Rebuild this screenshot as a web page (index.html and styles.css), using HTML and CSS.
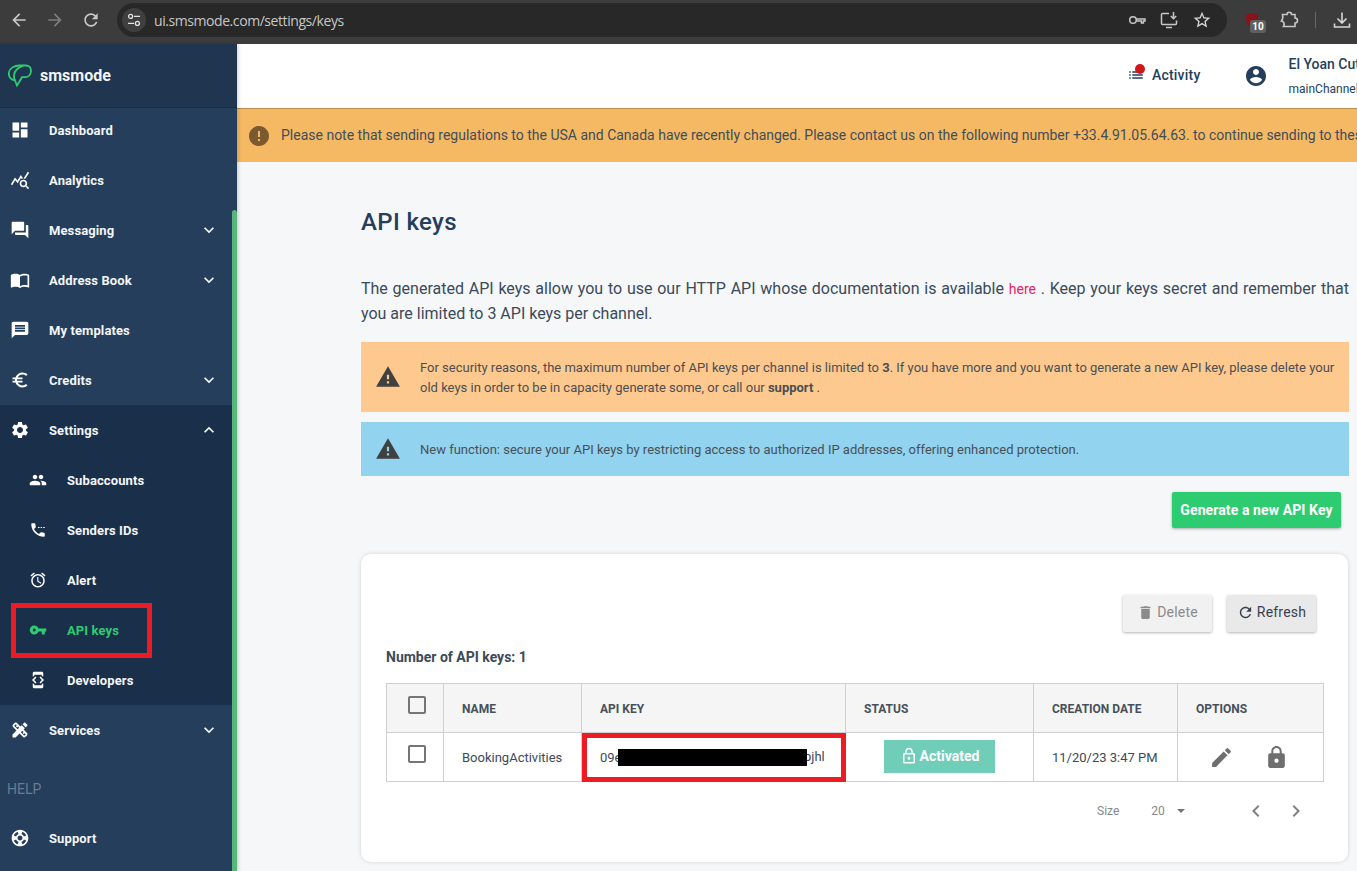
FILE: index.html
```html
<!DOCTYPE html>
<html>
<head>
  <title>API keys - smsmode</title>
  <link rel="stylesheet" href="styles.css">
</head>
<body>

<!-- icon sheet -->
<svg class="sprite" xmlns="http://www.w3.org/2000/svg">
  <symbol id="i-dashboard" viewBox="0 0 24 24"><path d="M3 13h8V3H3v10zm0 8h8v-6H3v6zm10 0h8V11h-8v10zm0-18v6h8V3h-8z"/></symbol>
  <symbol id="i-analytics" viewBox="0 0 24 24"><path d="M19.88 18.47c.44-.7.7-1.51.7-2.39 0-2.49-2.01-4.5-4.5-4.5s-4.5 2.01-4.5 4.5 2.01 4.5 4.49 4.5c.88 0 1.7-.26 2.39-.7L21.58 23 23 21.58l-3.12-3.11zm-3.8.11c-1.38 0-2.5-1.12-2.5-2.5s1.12-2.5 2.5-2.5 2.5 1.12 2.5 2.5-1.12 2.5-2.5 2.5zm-.36-8.5c-.74.02-1.45.18-2.1.45l-.55-.83-3.8 6.18-3.01-3.52-3.63 5.81L1 17l5-8 3 3.5L13 6l2.72 4.08zm2.59.5c-.64-.28-1.33-.45-2.05-.49L21.38 2 23 3.18l-4.69 7.4z"/></symbol>
  <symbol id="i-forum" viewBox="0 0 24 24"><path d="M21 6h-2v9H6v2c0 .55.45 1 1 1h11l4 4V7c0-.55-.45-1-1-1zm-4 6V3c0-.55-.45-1-1-1H3c-.55 0-1 .45-1 1v14l4-4h10c.55 0 1-.45 1-1z"/></symbol>
  <symbol id="i-book" viewBox="0 0 24 24"><path d="M21 5c-1.11-.35-2.33-.5-3.5-.5-1.95 0-4.05.4-5.5 1.5-1.45-1.1-3.55-1.5-5.5-1.5S2.45 4.9 1 6v14.65c0 .25.25.5.5.5.1 0 .15-.05.25-.05C3.1 20.45 5.05 20 6.5 20c1.95 0 4.05.4 5.5 1.5 1.35-.85 3.8-1.5 5.5-1.5 1.65 0 3.35.3 4.75 1.05.1.05.15.05.25.05.25 0 .5-.25.5-.5V6c-.6-.45-1.25-.75-2-1zm0 13.5c-1.1-.35-2.3-.5-3.5-.5-1.7 0-4.15.65-5.5 1.5V8c1.35-.85 3.8-1.5 5.5-1.5 1.2 0 2.4.15 3.5.5v11.5z"/></symbol>
  <symbol id="i-message" viewBox="0 0 24 24"><path d="M20 2H4c-1.1 0-1.99.9-1.99 2L2 22l4-4h14c1.1 0 2-.9 2-2V4c0-1.1-.9-2-2-2zm-2 12H6v-2h12v2zm0-3H6V9h12v2zm0-3H6V6h12v2z"/></symbol>
  <symbol id="i-euro" viewBox="0 0 24 24"><path d="M15 18.5c-2.51 0-4.68-1.42-5.76-3.5H15v-2H8.58c-.05-.33-.08-.66-.08-1s.03-.67.08-1H15V9H9.24C10.32 6.92 12.5 5.5 15 5.5c1.61 0 3.09.59 4.23 1.57L21 5.3C19.41 3.87 17.3 3 15 3c-3.92 0-7.24 2.51-8.48 6H3v2h3.06c-.04.33-.06.66-.06 1s.02.67.06 1H3v2h3.52c1.24 3.49 4.56 6 8.48 6 2.31 0 4.41-.87 6-2.3l-1.78-1.77c-1.13.98-2.6 1.57-4.22 1.57z"/></symbol>
  <symbol id="i-settings" viewBox="0 0 24 24"><path d="M19.14 12.94c.04-.3.06-.61.06-.94 0-.32-.02-.64-.07-.94l2.03-1.58c.18-.14.23-.41.12-.61l-1.92-3.32c-.12-.22-.37-.29-.59-.22l-2.39.96c-.5-.38-1.03-.7-1.62-.94l-.36-2.54c-.04-.24-.24-.41-.48-.41h-3.84c-.24 0-.43.17-.47.41l-.36 2.54c-.59.24-1.13.57-1.62.94l-2.39-.96c-.22-.08-.47 0-.59.22L2.74 8.87c-.12.21-.08.47.12.61l2.03 1.58c-.05.3-.09.63-.09.94s.02.64.07.94l-2.03 1.58c-.18.14-.23.41-.12.61l1.92 3.32c.12.22.37.29.59.22l2.39-.96c.5.38 1.03.7 1.62.94l.36 2.54c.05.24.24.41.48.41h3.84c.24 0 .44-.17.47-.41l.36-2.54c.59-.24 1.13-.56 1.62-.94l2.39.96c.22.08.47 0 .59-.22l1.92-3.32c.12-.22.07-.47-.12-.61l-2.01-1.58zM12 15.6c-1.98 0-3.6-1.62-3.6-3.6s1.62-3.6 3.6-3.6 3.6 1.62 3.6 3.6-1.62 3.6-3.6 3.6z"/></symbol>
  <symbol id="i-people" viewBox="0 0 24 24"><path d="M16 11c1.66 0 2.99-1.34 2.99-3S17.66 5 16 5c-1.66 0-3 1.34-3 3s1.34 3 3 3zm-8 0c1.66 0 2.99-1.34 2.99-3S9.66 5 8 5C6.34 5 5 6.34 5 8s1.34 3 3 3zm0 2c-2.33 0-7 1.17-7 3.5V19h14v-2.5c0-2.33-4.67-3.5-7-3.5zm8 0c-.29 0-.62.02-.97.05 1.16.84 1.97 1.97 1.97 3.45V19h6v-2.5c0-2.33-4.67-3.5-7-3.5z"/></symbol>
  <symbol id="i-phone" viewBox="0 0 24 24"><path d="M6.62 10.79c1.44 2.83 3.76 5.14 6.59 6.59l2.2-2.2c.27-.27.67-.36 1.02-.24 1.12.37 2.33.57 3.57.57.55 0 1 .45 1 1V20c0 .55-.45 1-1 1-9.39 0-17-7.61-17-17 0-.55.45-1 1-1h3.5c.55 0 1 .45 1 1 0 1.25.2 2.45.57 3.57.11.35.03.74-.25 1.02l-2.2 2.2z"/><path d="M12 8h2v1.4h-2zM15.5 8h2v1.4h-2zM19 8h2v1.4h-2z"/></symbol>
  <symbol id="i-alarm" viewBox="0 0 24 24"><path d="M22 5.72l-4.6-3.86-1.29 1.53 4.6 3.86L22 5.72zM7.88 3.39L6.6 1.86 2 5.71l1.29 1.53 4.59-3.85zM12.5 8H11v6l4.75 2.85.75-1.23-4-2.37V8zM12 4c-4.97 0-9 4.03-9 9s4.02 9 9 9c4.97 0 9-4.03 9-9s-4.03-9-9-9zm0 16c-3.87 0-7-3.13-7-7s3.13-7 7-7 7 3.13 7 7-3.13 7-7 7z"/></symbol>
  <symbol id="i-key" viewBox="0 0 24 24"><path d="M12.65 10C11.83 7.67 9.61 6 7 6c-3.31 0-6 2.69-6 6s2.69 6 6 6c2.61 0 4.83-1.67 5.65-4H17v4h4v-4h2v-4H12.65zM7 14c-1.1 0-2-.9-2-2s.9-2 2-2 2 .9 2 2-.9 2-2 2z"/></symbol>
  <symbol id="i-dev" viewBox="0 0 24 24"><path d="M7 5h10v2h2V3c0-1.1-.9-1.99-2-1.99L7 1c-1.1 0-2 .9-2 2v4h2V5zm8.41 11.59L20 12l-4.59-4.59L14 8.83 17.17 12 14 15.17l1.41 1.42zM10 15.17L6.83 12 10 8.83 8.59 7.41 4 12l4.59 4.59L10 15.17zM17 19H7v-2H5v4c0 1.1.9 2 2 2h10c1.1 0 2-.9 2-2v-4h-2v2z"/></symbol>
  <symbol id="i-services" viewBox="0 0 24 24"><path d="M16.24 11.51l1.57-1.57-3.75-3.75-1.57 1.57-4.14-4.13c-.78-.78-2.05-.78-2.83 0l-1.9 1.9c-.78.78-.78 2.05 0 2.83l4.13 4.13L3 17.25V21h3.75l4.76-4.76 4.13 4.13c.95.95 2.23.6 2.83 0l1.9-1.9c.78-.78.78-2.05 0-2.83l-4.13-4.13zm-7.06-.44L5.04 6.94l1.89-1.9L8.2 6.31 7.02 7.5l1.41 1.41 1.19-1.19 1.45 1.45-1.89 1.9zm7.88 7.89l-4.13-4.13 1.9-1.9 1.45 1.45-1.19 1.19 1.41 1.41 1.19-1.19 1.27 1.27-1.9 1.9zM20.71 7.04c.39-.39.39-1.02 0-1.41l-2.34-2.34c-.47-.47-1.12-.29-1.41 0l-1.83 1.83 3.75 3.75 1.83-1.83z"/></symbol>
  <symbol id="i-support" viewBox="0 0 24 24"><path d="M12 2C6.48 2 2 6.48 2 12s4.48 10 10 10 10-4.48 10-10S17.52 2 12 2zm7.46 7.12l-2.78 1.15c-.51-1.36-1.58-2.44-2.95-2.94l1.15-2.78c2.1.8 3.77 2.47 4.58 4.57zM12 15c-1.66 0-3-1.34-3-3s1.34-3 3-3 3 1.34 3 3-1.34 3-3 3zM9.13 4.54l1.17 2.78c-1.38.5-2.47 1.59-2.98 2.97L4.54 9.13c.81-2.11 2.48-3.78 4.59-4.59zM4.54 14.87l2.78-1.15c.51 1.38 1.59 2.46 2.97 2.96l-1.17 2.78c-2.1-.81-3.77-2.48-4.58-4.59zm10.34 4.59l-1.15-2.78c1.37-.51 2.45-1.59 2.95-2.97l2.78 1.17c-.81 2.1-2.48 3.77-4.58 4.58z"/></symbol>
  <symbol id="i-more" viewBox="0 0 24 24"><path d="M16.59 8.59L12 13.17 7.41 8.59 6 10l6 6 6-6z"/></symbol>
  <symbol id="i-less" viewBox="0 0 24 24"><path d="M12 8l-6 6 1.41 1.41L12 10.83l4.59 4.58L18 14z"/></symbol>
  <symbol id="i-warning" viewBox="0 0 24 24"><path d="M1 21h22L12 2 1 21zm12-3h-2v-2h2v2zm0-4h-2v-4h2v4z"/></symbol>
  <symbol id="i-error" viewBox="0 0 24 24"><path d="M12 2C6.48 2 2 6.48 2 12s4.48 10 10 10 10-4.48 10-10S17.52 2 12 2zm1 15h-2v-2h2v2zm0-4h-2V7h2v6z"/></symbol>
  <symbol id="i-list" viewBox="0 0 24 24"><path d="M3 13h2v-2H3v2zm0 4h2v-2H3v2zm0-8h2V7H3v2zm4 4h14v-2H7v2zm0 4h14v-2H7v2zM7 7v2h14V7H7z"/></symbol>
  <symbol id="i-account" viewBox="0 0 24 24"><path d="M12 2C6.48 2 2 6.48 2 12s4.48 10 10 10 10-4.48 10-10S17.52 2 12 2zm0 3c1.66 0 3 1.34 3 3s-1.34 3-3 3-3-1.34-3-3 1.34-3 3-3zm0 14.2c-2.5 0-4.71-1.28-6-3.22.03-1.99 4-3.08 6-3.08 1.99 0 5.97 1.09 6 3.08-1.29 1.94-3.5 3.22-6 3.22z"/></symbol>
  <symbol id="i-delete" viewBox="0 0 24 24"><path d="M6 19c0 1.1.9 2 2 2h8c1.1 0 2-.9 2-2V7H6v12zM19 4h-3.5l-1-1h-5l-1 1H5v2h14V4z"/></symbol>
  <symbol id="i-refresh" viewBox="0 0 24 24"><path d="M17.65 6.35C16.2 4.9 14.21 4 12 4c-4.42 0-7.99 3.58-7.99 8s3.57 8 7.99 8c3.73 0 6.84-2.55 7.73-6h-2.08c-.82 2.33-3.04 4-5.65 4-3.31 0-6-2.69-6-6s2.69-6 6-6c1.66 0 3.14.69 4.22 1.78L13 11h7V4l-2.35 2.35z"/></symbol>
  <symbol id="i-edit" viewBox="0 0 24 24"><path d="M3 17.25V21h3.75L17.81 9.94l-3.75-3.75L3 17.25zM20.71 7.04c.39-.39.39-1.02 0-1.41l-2.34-2.34c-.39-.39-1.02-.39-1.41 0l-1.83 1.83 3.75 3.75 1.83-1.83z"/></symbol>
  <symbol id="i-lock" viewBox="0 0 24 24"><path d="M18 8h-1V6c0-2.76-2.24-5-5-5S7 3.24 7 6v2H6c-1.1 0-2 .9-2 2v10c0 1.1.9 2 2 2h12c1.1 0 2-.9 2-2V10c0-1.1-.9-2-2-2zm-6 9c-1.1 0-2-.9-2-2s.9-2 2-2 2 .9 2 2-.9 2-2 2zm3.1-9H8.9V6c0-1.71 1.39-3.1 3.1-3.1 1.71 0 3.1 1.39 3.1 3.1v2z"/></symbol>
  <symbol id="i-lock-line" viewBox="0 0 24 24"><path d="M12 17c1.1 0 2-.9 2-2s-.9-2-2-2-2 .9-2 2 .9 2 2 2zm6-9h-1V6c0-2.76-2.24-5-5-5S7 3.24 7 6v2H6c-1.1 0-2 .9-2 2v10c0 1.1.9 2 2 2h12c1.1 0 2-.9 2-2V10c0-1.1-.9-2-2-2zM8.9 6c0-1.71 1.39-3.1 3.1-3.1s3.1 1.39 3.1 3.1v2H8.9V6zM18 20H6V10h12v10z"/></symbol>
  <symbol id="i-left" viewBox="0 0 24 24"><path d="M15.41 7.41L14 6l-6 6 6 6 1.41-1.41L10.83 12z"/></symbol>
  <symbol id="i-right" viewBox="0 0 24 24"><path d="M10 6L8.59 7.41 13.17 12l-4.58 4.59L10 18l6-6z"/></symbol>
</svg>

<!-- browser bar -->
<div class="chrome">
  <svg class="chrome-nav" viewBox="0 0 24 24"><path d="M20 11H7.83l5.59-5.59L12 4l-8 8 8 8 1.41-1.41L7.83 13H20v-2z"/></svg>
  <svg class="chrome-nav dim" viewBox="0 0 24 24"><path d="M12 4l-1.41 1.41L16.17 11H4v2h12.17l-5.58 5.59L12 20l8-8z"/></svg>
  <svg class="chrome-nav" viewBox="0 0 24 24"><use href="#i-refresh"/></svg>
  <div class="omnibox">
    <span class="site-btn">
      <svg width="14" height="14" viewBox="0 0 14 14" fill="none" stroke="#e3e3e3" stroke-width="1.3"><circle cx="3.6" cy="3.4" r="2"/><path d="M7 3.4h6M1 10.4h6"/><circle cx="10.4" cy="10.4" r="2"/></svg>
    </span>
    <span class="url">ui.smsmode.com/settings/keys</span>
    <span class="omni-icons">
      <svg width="18" height="18" viewBox="0 0 18 18" fill="none" stroke="#c7c7c7" stroke-width="1.5"><circle cx="5" cy="9" r="3.3"/><path d="M8.3 8h8.7v2h-1.6v2h-2v-2H8.3"/></svg>
      <svg width="18" height="18" viewBox="0 0 18 18" fill="none" stroke="#c7c7c7" stroke-width="1.5"><path d="M9 2.5H2.5a1 1 0 0 0-1 1v9a1 1 0 0 0 1 1h13a1 1 0 0 0 1-1V9.5M6 16.500h6M13.500 1v6.500M10.800 5l2.700 2.700L16.200 5"/></svg>
      <svg width="20" height="20" viewBox="0 0 24 24" fill="#d6d6d6"><path d="M22 9.240l-7.190-.62L12 2 9.190 8.630 2 9.240l5.460 4.730L5.820 21 12 17.270 18.180 21l-1.630-7.030L22 9.240zM12 15.400l-3.760 2.270 1-4.280-3.320-2.880 4.380-.38L12 6.100l1.710 4.040 4.380.38-3.320 2.880 1 4.280L12 15.400z"/></svg>
    </span>
  </div>
  <div class="chrome-tools">
    <span class="ublock">
      <svg class="shield" width="14" height="15" viewBox="0 0 16 18"><path d="M8 0l7 2.200v6C15 13 12 16 8 18 4 16 1 13 1 8.200v-6z" fill="#8b1218"/></svg>
      <span class="ublock-count">10</span>
    </span>
    <svg class="puzzle" width="20" height="20" viewBox="0 0 20 20" fill="none" stroke="#c7c7c7" stroke-width="1.6"><path d="M3.500 4.500H8c0-1.500 1-2.300 2.200-2.300s2.300.8 2.300 2.300H16v3.500c1.600 0 2.500 1.100 2.500 2.500S17.600 13 16 13v3.500H4.500c.8-1.500.8-3.500-.3-4.500-.5-.6-1.200-1-1.700-1 1.500-2 1.500-4.500 1-6.500z"/></svg>
    <span class="chrome-sep"></span>
    <svg class="download" width="18" height="18" viewBox="0 0 18 18" fill="none" stroke="#d6d6d6" stroke-width="1.6"><path d="M9 1.500v10M4.500 7.500L9 12l4.500-4.500M1.500 12.500v3.500h15v-3.500"/></svg>
  </div>
</div>

<div class="app">

  <!-- sidebar -->
  <aside class="sidebar">
    <div class="logo">
      <svg width="24" height="24" viewBox="0 0 24 24" fill="none" stroke="#2ecc71" stroke-width="1.800"><path d="M12 1.500h6c3 0 5 2.200 5 5.300 0 3.800-2.600 6.400-6 6.400h-3L9 21.500 7 16.500C3 15.500.8 12.800.8 9.500.8 4.500 6 1.500 12 1.500z"/><path d="M15 1.700C10.500 3.500 6.500 7 6 11c-.2 2 .3 4 1 5.500"/></svg>
      <span class="logo-text">smsmode</span>
    </div>
    <nav class="menu">
      <a class="item"><svg class="ico"><use href="#i-dashboard"/></svg>Dashboard</a>
      <a class="item"><svg class="ico"><use href="#i-analytics"/></svg>Analytics</a>
      <a class="item"><svg class="ico"><use href="#i-forum"/></svg>Messaging<svg class="chev"><use href="#i-more"/></svg></a>
      <a class="item"><svg class="ico"><use href="#i-book"/></svg>Address Book<svg class="chev"><use href="#i-more"/></svg></a>
      <a class="item"><svg class="ico"><use href="#i-message"/></svg>My templates</a>
      <a class="item"><svg class="ico"><use href="#i-euro"/></svg>Credits<svg class="chev"><use href="#i-more"/></svg></a>
      <div class="group">
        <a class="item"><svg class="ico"><use href="#i-settings"/></svg>Settings<svg class="chev"><use href="#i-less"/></svg></a>
        <a class="item sub"><svg class="ico"><use href="#i-people"/></svg>Subaccounts</a>
        <a class="item sub"><svg class="ico"><use href="#i-phone"/></svg>Senders IDs</a>
        <a class="item sub"><svg class="ico"><use href="#i-alarm"/></svg>Alert</a>
        <a class="item sub active"><svg class="ico"><use href="#i-key"/></svg>API keys</a>
        <a class="item sub"><svg class="ico"><use href="#i-dev"/></svg>Developers</a>
      </div>
      <a class="item"><svg class="ico"><use href="#i-services"/></svg>Services<svg class="chev"><use href="#i-more"/></svg></a>
      <div class="menu-label">HELP</div>
      <a class="item"><svg class="ico"><use href="#i-support"/></svg>Support</a>
    </nav>
    <div class="scroll-thumb"></div>
    <div class="mark mark-menu"></div>
  </aside>

  <!-- main column -->
  <main class="main">
    <header class="topbar">
      <span class="activity">
        <svg class="activity-ico"><use href="#i-list"/></svg>
        <span class="dot"></span>
        Activity
      </span>
      <svg class="avatar"><use href="#i-account"/></svg>
      <span class="user">
        <span class="user-name">El Yoan Cut</span>
        <span class="user-channel">mainChannel</span>
      </span>
    </header>

    <div class="notice">
      <svg class="notice-ico"><use href="#i-error"/></svg>
      <span class="notice-text">Please note that sending regulations to the USA and Canada have recently changed. Please contact us on the following number +33.4.91.05.64.63. to continue sending to these destinations.</span>
    </div>

    <section class="content">
      <h1>API keys</h1>
      <p class="intro">The generated API keys allow you to use our HTTP API whose documentation is available <a class="link">here</a> . Keep your keys secret and remember that you are limited to 3 API keys per channel.</p>

      <div class="alert alert-orange">
        <svg class="alert-ico"><use href="#i-warning"/></svg>
        <div class="alert-text">For security reasons, the maximum number of API keys per channel is limited to <b>3</b>. If you have more and you want to generate a new API key, please delete your old keys in order to be in capacity generate some, or call our <b>support</b> .</div>
      </div>
      <div class="alert alert-blue">
        <svg class="alert-ico"><use href="#i-warning"/></svg>
        <div class="alert-text">New function: secure your API keys by restricting access to authorized IP addresses, offering enhanced protection.</div>
      </div>

      <div class="generate-row"><button class="btn-green">Generate a new API Key</button></div>

      <div class="card">
        <div class="actions">
          <button class="btn disabled"><svg><use href="#i-delete"/></svg>Delete</button>
          <button class="btn"><svg><use href="#i-refresh"/></svg>Refresh</button>
        </div>
        <div class="count">Number of API keys: 1</div>

        <table class="keys">
          <colgroup>
            <col class="c-check"><col class="c-name"><col class="c-key"><col class="c-status"><col class="c-date"><col class="c-options">
          </colgroup>
          <thead>
            <tr>
              <th class="check-cell"><span class="checkbox"></span></th>
              <th>NAME</th>
              <th>API KEY</th>
              <th>STATUS</th>
              <th>CREATION DATE</th>
              <th>OPTIONS</th>
            </tr>
          </thead>
          <tbody>
            <tr>
              <td class="check-cell"><span class="checkbox"></span></td>
              <td>BookingActivities</td>
              <td class="key-cell">09e<span class="key-end">pjhl</span><span class="redact"></span><span class="mark mark-key"></span></td>
              <td class="status-cell"><span class="badge"><svg><use href="#i-lock-line"/></svg>Activated</span></td>
              <td>11/20/23 3:47 PM</td>
              <td class="options-cell">
                <svg class="opt"><use href="#i-edit"/></svg>
                <svg class="opt"><use href="#i-lock"/></svg>
              </td>
            </tr>
          </tbody>
        </table>

        <div class="pager">
          <span class="pager-label">Size</span>
          <span class="pager-size">20</span>
          <span class="pager-caret"></span>
          <svg class="pager-arrow first"><use href="#i-left"/></svg>
          <svg class="pager-arrow"><use href="#i-right"/></svg>
        </div>
      </div>
    </section>
  </main>
</div>

</body>
</html>
```

FILE: styles.css
```css
* {
  box-sizing: border-box;
}

html, body {
  margin: 0;
  height: 871px;
  overflow: hidden;
}

body {
  font-family: Roboto, "Liberation Sans", sans-serif;
  background-color: #f5f7f9;
}

.sprite {
  display: none;
}

/* browser bar */

.chrome {
  height: 44px;
  background-color: #3c3c3c;
  display: flex;
  align-items: flex-start;
  padding: 3px 0 0 9px;
}

.chrome-nav {
  width: 20px;
  height: 20px;
  fill: #c7c7c7;
  margin: 7px 16px 0 0;
  flex: none;
}

.chrome-nav.dim {
  fill: #7d7d7d;
}

.omnibox {
  width: 1110px;
  height: 34px;
  border-radius: 17px;
  background-color: #282828;
  display: flex;
  align-items: center;
  padding-left: 5px;
  flex: none;
}

.site-btn {
  width: 24px;
  height: 24px;
  border-radius: 50%;
  background-color: #3f3f3f;
  display: flex;
  align-items: center;
  justify-content: center;
}

.url {
  margin-left: 8px;
  font-size: 14px;
  color: #c7c7c7;
  font-family: "Open Sans", sans-serif;
  letter-spacing: -0.43px;
}

.omni-icons {
  margin-left: auto;
  margin-right: 15px;
  display: flex;
  align-items: center;
  gap: 14px;
}

.chrome-tools {
  display: flex;
  align-items: center;
  height: 34px;
  margin-left: 17px;
}

.ublock {
  position: relative;
  width: 24px;
  height: 24px;
  display: block;
  margin-left: 1px;
}

.shield {
  display: block;
  margin-top: 5px;
}

.ublock-count {
  position: absolute;
  left: 5px;
  top: 12px;
  width: 16px;
  height: 13px;
  border-radius: 3px;
  background-color: #5f5f5f;
  color: #fff;
  font-size: 10px;
  font-weight: 700;
  line-height: 13px;
  text-align: center;
}

.puzzle {
  margin-left: 10px;
}

.chrome-sep {
  width: 1px;
  height: 16px;
  margin-left: 16px;
  background-color: #6a6a6a;
}

.download {
  margin-left: 17px;
}

/* page frame */

.app {
  display: flex;
  height: 827px;
}

.sidebar {
  width: 237px;
  flex: none;
  position: relative;
  background-color: #243e5c;
  color: #fff;
  box-shadow: 1px 0 4px rgba(0, 0, 0, 0.2);
  z-index: 2;
}

.logo {
  height: 64px;
  background-color: #203650;
  border-bottom: 1px solid #1a2c44;
  display: flex;
  align-items: center;
  padding-left: 8px;
  position: relative;
  z-index: 1;
}

.logo-text {
  margin-left: 8px;
  font-size: 16px;
  font-weight: 700;
  color: #f2f4f6;
}

.menu {
  margin-top: -3px;
  width: 232px;
}

.item {
  height: 50px;
  display: flex;
  align-items: center;
  padding-left: 10px;
  font-size: 13px;
  font-weight: 700;
  letter-spacing: 0.1px;
  color: #f3f5f7;
}

.ico {
  width: 20px;
  height: 20px;
  fill: #fff;
  margin-right: 19px;
  flex: none;
}

.chev {
  width: 20px;
  height: 20px;
  fill: #fff;
  margin-left: auto;
  margin-right: 13px;
}

.group {
  background-color: #1a2f4a;
}

.item.sub {
  padding-left: 29px;
}

.item.sub .ico {
  width: 18px;
  height: 18px;
  margin-right: 20px;
}

.item.active {
  color: #2ecc71;
}

.item.active .ico {
  fill: #2ecc71;
}

.menu-label {
  height: 58px;
  padding: 26px 0 0 7px;
  font-size: 14px;
  line-height: 16px;
  color: #6a7c90;
}

.scroll-thumb {
  position: absolute;
  right: 0;
  top: 166px;
  bottom: -10px;
  width: 5px;
  border-radius: 3px;
  background-color: #55b879;
}

/* hand-drawn red marks on the screenshot */

.mark {
  position: absolute;
  border: 5px solid #ed1c24;
}

.mark-menu {
  left: 11px;
  top: 559px;
  width: 141px;
  height: 55px;
}

.mark-key {
  left: 0;
  top: 0;
  right: -1px;
  bottom: -1px;
}

.main {
  flex: 1;
  min-width: 0;
  overflow: hidden;
}

/* top bar */

.topbar {
  height: 64px;
  background-color: #fff;
  display: flex;
  align-items: center;
  padding-left: 890px;
  color: #243e5c;
  white-space: nowrap;
}

.activity {
  position: relative;
  display: flex;
  align-items: center;
  margin-top: -2px;
  font-size: 14px;
  font-weight: 500;
  letter-spacing: 0.2px;
}

.activity-ico {
  width: 18px;
  height: 18px;
  fill: #243e5c;
  margin-right: 7px;
}

.dot {
  position: absolute;
  left: 8px;
  top: -2px;
  width: 10px;
  height: 10px;
  border-radius: 50%;
  background-color: #d0171b;
}

.avatar {
  width: 24px;
  height: 24px;
  fill: #243e5c;
  margin: 0 0 0 44px;
  flex: none;
}

.user {
  margin-left: 20px;
  display: flex;
  flex-direction: column;
  gap: 9px;
}

.user-name {
  font-size: 14px;
  font-weight: 500;
  line-height: 16px;
}

.user-channel {
  font-size: 12px;
  line-height: 16px;
}

/* notice */

.notice {
  height: 54px;
  border-top: 1px solid #b98d4c;
  background-color: #f5b963;
  display: flex;
  align-items: center;
  padding-left: 10px;
  font-size: 14px;
  color: #3f4d5c;
  white-space: nowrap;
}

.notice-ico {
  width: 24px;
  height: 24px;
  fill: #7a5a2e;
  margin-right: 10px;
  flex: none;
}

.notice-text {
  margin-top: -2px;
}

/* content */

.content {
  width: 988px;
  margin-left: 124px;
}

h1 {
  margin: 46px 0 0 0;
  font-size: 24px;
  font-weight: 500;
  line-height: 28px;
  letter-spacing: 0.35px;
  color: #243e5c;
}

.intro {
  margin: 40px 0 0 0;
  font-size: 16px;
  line-height: 25px;
  text-align: justify;
  color: #3c4a59;
}

.link {
  font-size: 14px;
  line-height: 1;
  color: #e91e63;
}

.alert {
  display: flex;
  align-items: center;
  font-size: 13px;
  line-height: 20px;
  color: #4a4f55;
}

.alert-orange {
  height: 70px;
  margin-top: 16px;
  background-color: #fdc98f;
}

.alert-blue {
  height: 54px;
  margin-top: 10px;
  background-color: #92d3f0;
}

.alert-ico {
  width: 26px;
  height: 26px;
  fill: #404040;
  margin: 0 19px 0 14px;
  flex: none;
}

.alert-text {
  padding-top: 1px;
}

.generate-row {
  margin-top: 16px;
  padding-right: 8px;
  display: flex;
  justify-content: flex-end;
}

.btn-green {
  height: 36px;
  width: 169px;
  border: none;
  border-radius: 2px;
  background-color: #2ecc71;
  color: #fff;
  font-family: inherit;
  font-size: 14px;
  font-weight: 700;
  letter-spacing: 0.1px;
  padding: 0;
  box-shadow: 0 1px 3px rgba(0, 0, 0, 0.3);
}

.card {
  margin-top: 26px;
  height: 308px;
  width: 987px;
  padding: 41px 24px 0 25px;
  background-color: #fff;
  border-radius: 10px;
  box-shadow: 0 0 4px rgba(0, 0, 0, 0.15);
}

.actions {
  display: flex;
  justify-content: flex-end;
  gap: 15px;
  padding-right: 8px;
}

.btn {
  width: 89px;
  height: 37px;
  border: none;
  border-radius: 2px;
  background-color: #e9e9e9;
  color: #37424e;
  font-family: inherit;
  font-size: 14px;
  font-weight: 400;
  letter-spacing: 0.2px;
  display: flex;
  align-items: center;
  justify-content: center;
  padding: 0 0 3px 0;
  box-shadow: 0 1px 3px rgba(0, 0, 0, 0.3);
}

.btn svg {
  width: 17px;
  height: 17px;
  fill: currentColor;
  margin-right: 3px;
}

.btn.disabled {
  background-color: #f1f1f1;
  color: #8b8b8b;
}

.count {
  margin-top: 15px;
  font-size: 14px;
  font-weight: 700;
  line-height: 20px;
  color: #3c4a59;
}

/* table */

.keys {
  margin-top: 16px;
  width: 937px;
  border-collapse: collapse;
  table-layout: fixed;
  font-size: 13px;
  color: #3c4a59;
}

.c-check { width: 57px; }
.c-name { width: 138px; }
.c-key { width: 264px; }
.c-status { width: 188px; }
.c-date { width: 144px; }
.c-options { width: 146px; }

.keys th, .keys td {
  border: 1px solid #cfcfcf;
  padding: 0 0 0 18px;
  text-align: left;
  white-space: nowrap;
}

.keys th {
  height: 49px;
  padding-top: 2px;
  background-color: #f5f5f5;
  font-size: 12px;
  font-weight: 700;
  color: #47505a;
}

.keys td {
  height: 49px;
}

.keys .check-cell {
  padding: 0 0 0 3px;
  text-align: center;
}

.checkbox {
  display: inline-block;
  width: 18px;
  height: 18px;
  border: 2px solid #757575;
  border-radius: 2px;
  vertical-align: middle;
  position: relative;
  top: -3px;
}

.key-cell {
  position: relative;
}

.redact {
  position: absolute;
  left: 36px;
  top: 16px;
  width: 189px;
  height: 17px;
  background-color: #000;
}

.key-end {
  position: absolute;
  left: 222px;
  top: 16px;
}

.keys .status-cell {
  padding: 0 0 2px 38px;
}

.badge {
  width: 111px;
  height: 33px;
  display: flex;
  align-items: center;
  justify-content: center;
  background-color: #6fcdb8;
  color: #fff;
  font-size: 14px;
  font-weight: 700;
}

.badge svg {
  width: 18px;
  height: 18px;
  fill: #fff;
  margin-right: 2px;
}

.keys .options-cell {
  padding: 0 0 0 31px;
}

.opt {
  width: 25px;
  height: 25px;
  fill: #6f6f6f;
  vertical-align: middle;
}

.opt + .opt {
  margin-left: 27px;
}

/* pager */

.pager {
  margin-top: 21px;
  height: 16px;
  display: flex;
  align-items: center;
  font-size: 12px;
  color: #888;
  padding-left: 711px;
}

.pager-size {
  margin-left: 32px;
}

.pager-caret {
  margin-left: 12px;
  border-left: 4px solid transparent;
  border-right: 4px solid transparent;
  border-top: 4px solid #757575;
}

.pager-arrow {
  width: 24px;
  height: 24px;
  fill: #808080;
  margin-left: 16px;
  flex: none;
}

.pager-arrow.first {
  margin-left: 59px;
}
```
